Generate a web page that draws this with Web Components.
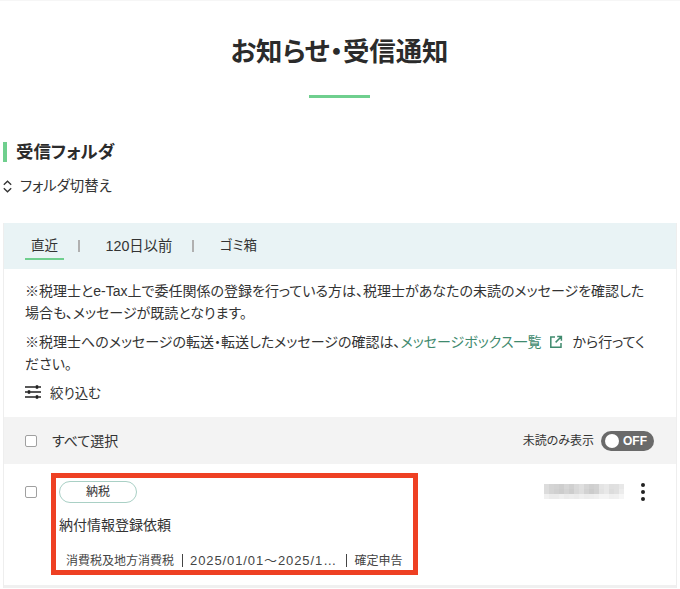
<!DOCTYPE html>
<html lang="ja">
<head>
<meta charset="utf-8">
<title>お知らせ・受信通知</title>
<style>
  html, body { margin: 0; background: #fff; }
  body {
    font-family: "Liberation Sans", "Noto Sans CJK JP", sans-serif;
    color: #333;
    font-feature-settings: "palt";
    overflow: hidden;
  }
</style>
</head>
<body>
<notice-page>
  <page-title>お知らせ・受信通知</page-title>
  <folder-head>受信フォルダ</folder-head>
  <inbox-card>
    <inbox-tabs></inbox-tabs>
    <p>※税理士とe-Tax上で委任関係の登録を行っている方は、税理士があなたの未読のメッセージを確認した場合も、メッセージが既読となります。</p>
    <p>※税理士へのメッセージの転送・転送したメッセージの確認は、<a>メッセージボックス一覧<svg viewBox="0 0 14 14" width="14" height="14" fill="none" stroke="currentColor" stroke-width="1.5"><path d="M6 2H1.8v10.2H12V8M8.2 1.6h4.2v4.2M12.2 1.8 6.6 7.4"/></svg></a><span>から行ってく</span><span>ださい。</span></p>
  </inbox-card>
</notice-page>

<script>
// little helper so each element below only has to hand over its markup
const shadow = (el, html) => {
  el.attachShadow({ mode: "open" }).innerHTML = html;
};

// the date in the reference is mosaicked out: 5px cells, darker on top
const mosaic = () => {
  const rows = [
    "dcd4d2ced6d0d9dfd5cfd2e4e8dfe0e8",
    "dcd4d0ccd3cdd8ded2cbd1e2e8dce0ec",
    "f0ebebefebedebefecedeff4f4eff0f6",
  ];
  let out = "";
  rows.forEach((row, y) => {
    for (let x = 0; x < 16; x++) {
      const c = row.substr(x * 2, 2);
      out += `<rect x="${x * 5}" y="${y * 5}" width="5" height="5" fill="#${c}${c}${c}"/>`;
    }
  });
  return out;
};

class NoticePage extends HTMLElement {
  constructor() {
    super();
    shadow(this, `
      <style>
        :host { display: block; width: 680px; height: 589px; border-top: 1px solid #f6f6f6; box-sizing: border-box; }
      </style>
      <slot></slot>`);
  }
}

class PageTitle extends HTMLElement {
  constructor() {
    super();
    shadow(this, `
      <style>
        :host { display: flex; flex-direction: column; align-items: center; padding-top: 32px; }
        h1 { margin: 0 1px 0 0; font-size: 26.4px; line-height: 38px; font-weight: 700; color: #2b2b2b; }
        i { display: block; width: 61px; height: 3px; margin: 24px 1px 0 0; background: #6fcf8e; }
      </style>
      <h1><slot></slot></h1><i></i>`);
  }
}

class FolderHead extends HTMLElement {
  constructor() {
    super();
    shadow(this, `
      <style>
        :host { display: block; padding: 44px 0 0 3px; }
        h2 { margin: 0; padding-left: 9px; border-left: 4px solid #6fcf8e; font-size: 17.4px; line-height: 20px; font-weight: 700; color: #2b2b2b; }
        div { display: flex; align-items: center; gap: 8px; margin-top: 14px; font-size: 14.4px; line-height: 20px; color: #333; }
      </style>
      <h2><slot></slot></h2>
      <div>
        <svg width="9" height="13" viewBox="0 0 9 13" fill="none" stroke="#333" stroke-width="1.3"><path d="M.8 4.8 4.5 1.2l3.7 3.6M.8 8.2l3.7 3.6 3.7-3.6"/></svg>
        フォルダ切替え
      </div>`);
  }
}

class InboxTabs extends HTMLElement {
  constructor() {
    super();
    shadow(this, `
      <style>
        :host { display: flex; align-items: center; height: 46px; padding-left: 21px; background: #e9f3f5; font-size: 13.5px; color: #333; box-sizing: border-box; }
        span { position: relative; padding: 0 6px; line-height: 46px; }
        span.on::after { content: ""; position: absolute; left: 0; right: 0; bottom: 9px; height: 2px; background: #6fcf8e; }
        b { width: 1.5px; height: 12px; background: #b0b0b0; margin: 0 0 0 14px; }
      </style>
      <span class="on">直近</span><b></b>
      <span style="margin-left:20px;font-size:14.3px">120日以前</span><b style="margin-left:14px"></b>
      <span style="margin-left:20px">ゴミ箱</span>`);
  }
}

class InboxCard extends HTMLElement {
  constructor() {
    super();
    shadow(this, `
      <style>
        :host { display: block; margin: 27px 3px 0 3px; border-right: 1px solid #eee; border-left: 1px solid #eee; }
        .notes { padding: 12px 28px 0 21px; font-size: 14px; line-height: 21.5px; color: #333; }
        ::slotted(p) { margin: 0 0 8px; }
        .filter { display: flex; align-items: center; gap: 9px; padding: 0 0 16px 21px; height: 34px; box-sizing: border-box; font-size: 13.5px; }
        .all { display: flex; align-items: center; height: 47px; padding: 0 22px 0 21px; background: #f3f3f3; font-size: 14px; }
        .all .lbl { margin-left: 15px; flex: 1; position: relative; top: -1px; }
        .unread { font-size: 12px; margin-right: 7px; position: relative; top: -1px; }
        .toggle { display: flex; align-items: center; width: 53px; height: 20px; border-radius: 10px; background: #6a6a6a; color: #fff; font-size: 12px; font-weight: 700; box-sizing: border-box; padding-left: 4px; gap: 4px; }
        .toggle i { width: 14px; height: 14px; border-radius: 50%; background: #fff; }
        .box { width: 12px; height: 12px; border: 1.5px solid #a0a0a0; border-radius: 2px; background: #fff; box-sizing: border-box; flex: none; }
        .row { display: flex; align-items: flex-start; height: 124px; padding: 9px 0 0 21px; border-bottom: 3px solid #f0f0f0; box-sizing: border-box; }
        .row .box { margin-top: 13px; }
        .frame { width: 367px; height: 102px; margin-left: 14px; border: 5px solid #ee4023; box-sizing: border-box; padding: 3px 0 0 3px; flex: none; }
        .tag { width: 78px; height: 22px; border: 1px solid #a9d0c5; border-radius: 11px; box-sizing: border-box; text-align: center; font-size: 12px; line-height: 21px; }
        .subj { margin-top: 11px; font-size: 14px; line-height: 22px; }
        .meta { margin: 16px 0 0 7px; font-size: 12px; line-height: 18px; white-space: nowrap; color: #444; }
        .meta s { display: inline-block; width: 1px; height: 13px; background: #444; vertical-align: -2px; margin: 0 7.5px; }
        .meta s.end { margin-left: 9px; }
        .meta b { font-weight: 400; font-size: 13px; letter-spacing: .9px; }
        .date { margin: 11px 0 0 126px; width: 80px; height: 15px; flex: none; }
        .date svg { display: block; filter: blur(.6px); }
        .kebab { display: flex; flex-direction: column; gap: 3px; margin: 10px 0 0 17px; }
        .kebab i { width: 4px; height: 4px; border-radius: 50%; background: #222; }
      </style>
      <slot name="tabs"></slot>
      <div class="notes"><slot></slot></div>
      <div class="filter">
        <svg width="16" height="14" viewBox="0 0 16 14" fill="none" stroke="#222" stroke-width="1.3"><path d="M0 2h16M0 7h16M0 12h16"/><path d="M12 .2v3.6M4 5.2v3.6M12 10.2v3.6" stroke-width="2.4"/></svg>
        絞り込む
      </div>
      <div class="all">
        <span class="box"></span><span class="lbl">すべて選択</span>
        <span class="unread">未読のみ表示</span>
        <span class="toggle"><i></i>OFF</span>
      </div>
      <div class="row">
        <span class="box"></span>
        <div class="frame">
          <div class="tag">納税</div>
          <div class="subj">納付情報登録依頼</div>
          <div class="meta">消費税及地方消費税<s></s><b>2025/01/01～2025/1…</b><s class="end"></s>確定申告</div>
        </div>
        <div class="date"><svg width="80" height="15" viewBox="0 0 80 15">${mosaic()}</svg></div>
        <div class="kebab"><i></i><i></i><i></i></div>
      </div>`);
  }
  connectedCallback() {
    const t = this.querySelector("inbox-tabs");
    if (t) t.slot = "tabs";
    // link styling lives on the light-dom anchor, so it sits here
    const a = this.querySelector("a");
    if (a) {
      a.style.cssText = "color:#3f8a6e;text-decoration:none";
      const s = a.querySelector("svg");
      s.style.cssText = "vertical-align:-2px;margin:0 10px 0 7px";
    }
  }
}

customElements.define("notice-page", NoticePage);
customElements.define("page-title", PageTitle);
customElements.define("folder-head", FolderHead);
customElements.define("inbox-tabs", InboxTabs);
customElements.define("inbox-card", InboxCard);
</script>
</body>
</html>
